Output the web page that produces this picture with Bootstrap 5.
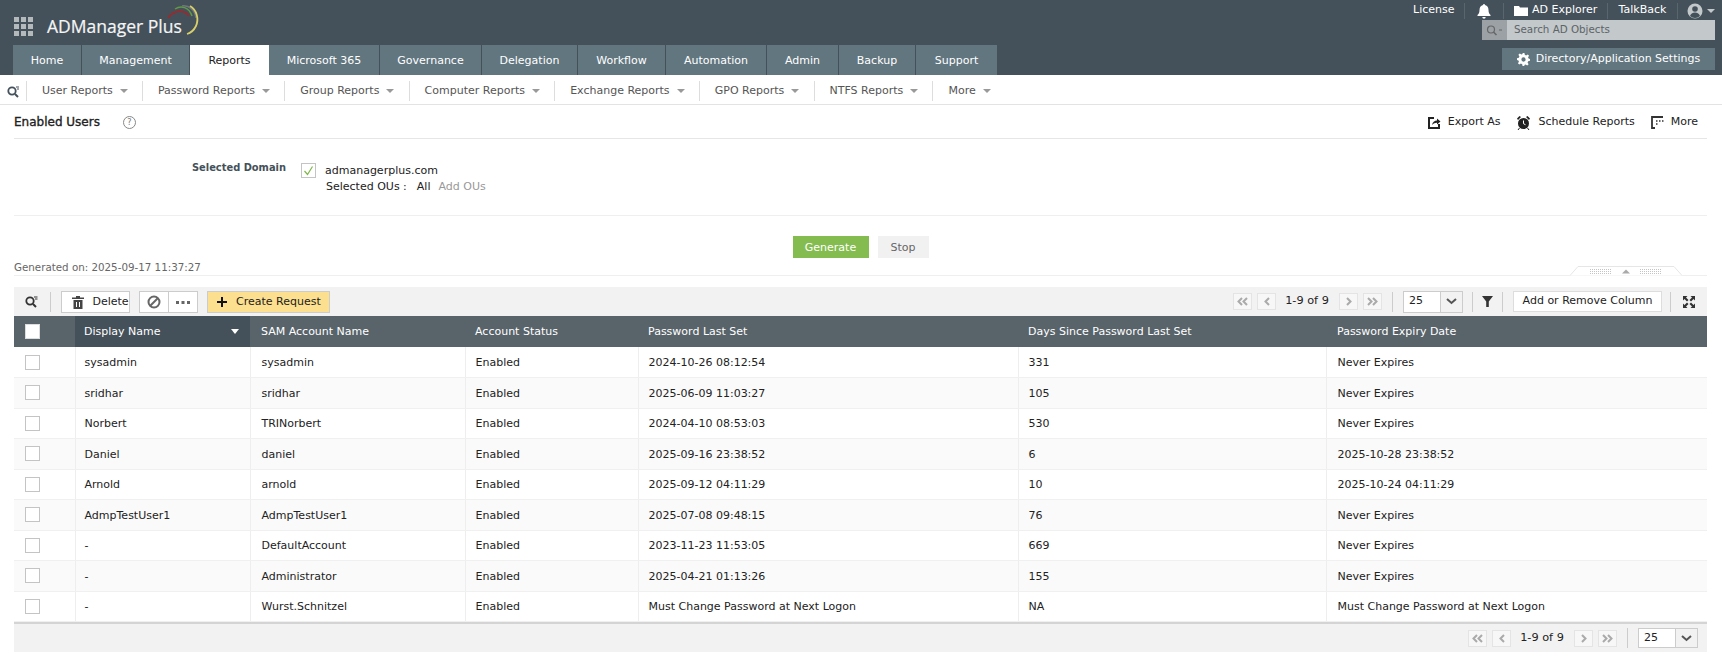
<!DOCTYPE html>
<html lang="en"><head><meta charset="utf-8"><title>ADManager Plus</title>
<link href="https://cdn.jsdelivr.net/npm/bootstrap@5.3.0/dist/css/bootstrap.min.css" rel="stylesheet">
<style>
html,body{height:657px;overflow:hidden}
body{font-family:"DejaVu Sans",Verdana,sans-serif;font-size:11px;color:#222;background:#fff}
a{text-decoration:none;color:inherit}
.hdr{height:75px;background:#44515a;color:#fff}
.hdr-left{padding-left:13px;width:1000px}
.brand{height:45px;position:relative;padding-top:7px}
.grid9{width:19px;height:19px;display:grid;grid-template-columns:repeat(3,5px);grid-auto-rows:5px;gap:2px;margin:0 14px 0 1px}
.grid9 i{background:#b4b9bc;display:block}
.brand-name{font-family:"Open Sans",sans-serif;font-size:17.5px;color:#f4f5f5;-webkit-text-stroke:.2px #f4f5f5}
.swoosh{position:absolute;left:154px;top:4px}
.tabs a{height:30px;display:flex;align-items:center;justify-content:center;background:#62767f;color:#fff;border-right:1px solid #44515a;padding-top:3px}
.tabs a.on{background:#fff;color:#222;border-right:0}
.tabs a:nth-child(1){width:69px}.tabs a:nth-child(2){width:108px}.tabs a:nth-child(3){width:79px}.tabs a:nth-child(4){width:111px}.tabs a:nth-child(5){width:102px}.tabs a:nth-child(6){width:96px}.tabs a:nth-child(7){width:88px}.tabs a:nth-child(8){width:101px}.tabs a:nth-child(9){width:72px}.tabs a:nth-child(10){width:77px}.tabs a:nth-child(11){width:81px;border-right:0}
.hdr-right{width:310px;margin-right:7px}
.top-links{height:20px;white-space:nowrap;padding-top:1px}
.top-links>span{display:flex;align-items:center;gap:4px;height:16px;border-right:1px solid #5a666e}
.tl1{padding:0 11px 0 0;width:52px}
.tl2{width:39px;justify-content:center}
.tl3{width:104px;padding-left:10px}
.tl4{width:70px;justify-content:center}
.tl5{border-right:0!important;width:37px;justify-content:flex-end}
.ad-search{width:233px;height:20px;background:#c3c8ca;font-size:10.3px}
.ad-search b{width:25px;height:20px;background:#9ba1a5;display:flex;align-items:center;justify-content:center;font-weight:400}
.ad-search span{padding-left:7px;color:#5c6468}
.set-btn{width:213px;height:22px;margin-top:8px;background:#62767f;color:#fff;gap:6px}
.subnav{height:30px;border-bottom:1px solid #e3e3e3;color:#555;white-space:nowrap;padding-top:3px}
.subnav .srch{width:27px;height:20px;border-right:1px solid #ddd;padding-left:7px}
.subnav .it{height:20px;display:flex;align-items:center;padding:0 14.2px 0 15px;border-right:1px solid #ddd}
.subnav .it:last-child{border-right:0}
.tcaret{width:0;height:0;border-left:4px solid transparent;border-right:4px solid transparent;border-top:4px solid #999;margin-left:7px;display:inline-block}
.tl5 .tcaret{border-top-color:#c3c8ca;margin-left:0}
.page{padding:0 15px 0 14px}
.titlebar{height:34px;border-bottom:1px solid #e6e6e6;padding-top:2px}
.titlebar h1{font-size:12px;font-weight:400;-webkit-text-stroke:.35px #222;margin:0;color:#222}
.help{width:13px;height:13px;border:1px solid #888;border-radius:50%;color:#777;font-size:8px;line-height:11px;text-align:center;margin-left:23px}
.act{gap:7px;margin-left:16px;color:#222}
.acts{padding-right:9px}
.selbox{height:77px;border-bottom:1px solid #efefef;padding-top:21px}
.sel-lab{width:272px;text-align:right;color:#44515a;font-weight:700;font-size:9.9px;line-height:15px;flex:none}
.chk{width:15px;height:15px;border:1px solid #c4c4c4;display:inline-block;background:#fff;flex:none;position:relative}
.dom{margin-left:15px;padding-top:2px}
.dom-name{margin-left:9px;padding-top:1px}
.ou-row{margin-top:-1px;padding-left:25px;line-height:16px}
.ou-row b{font-weight:400;margin-left:10px}
.muted-link{color:#999;margin-left:8px}
.actions{height:42px;padding-top:20px;gap:9px}
.go{width:76px;height:22px;background:#84bc4f;color:#fff;border:0;border-radius:0;font-size:11px;padding:2px 0 0}
.stop{width:51px;height:22px;background:#f1f1f1;color:#666;border:0;border-radius:0;font-size:11px;padding:2px 0 0}
.gen{height:18px;color:#666;font-size:10.3px;border-bottom:1px solid #efefef;position:relative;line-height:14px;padding-top:2px}
.collapse-tab{position:absolute;right:25px;bottom:-1px}
.tb{height:29px;background:#f2f2f2;margin-top:11px;white-space:nowrap}
.vsep{width:1px;height:20px;background:#ccc;flex:none}
.bx{height:22px;background:#fff;border:1px solid #ccc;display:flex;align-items:center;flex:none}
.tb-srch{margin-left:11px;margin-right:12px}
.delb{width:69px;margin-left:10px;padding-left:10px;padding-top:2px;gap:5px}
.grp{width:59px;margin-left:9px}
.grp span{flex:1;height:100%;display:flex;align-items:center;justify-content:center}
.grp span+span{border-left:1px solid #ccc}
.crq{width:123px;margin-left:9px;background:#fde08f;padding-left:9px;padding-top:1px;gap:9px}
.pg{width:19px;height:17px;background:#f7f7f7;border:1px solid #e4e4e4;display:flex;align-items:center;justify-content:center;flex:none}
.pg+.pg{margin-left:5px}
.pgt{margin:0 10px 0 9px;width:44px;text-align:center;font-size:11.3px;white-space:nowrap;flex:none}
.vs{margin:0 10px}
.sz{width:60px}
.sz em{font-style:normal;flex:1;padding-left:5px}
.sz u{text-decoration:none;width:22px;height:100%;border-left:1px solid #ccc;background:#f2f2f2;display:flex;align-items:center;justify-content:center}
.addcol{width:149px;height:21px;justify-content:center;border-color:#ddd;margin-left:10px}
.s1{margin-left:9px}.fil{margin:0 9px;width:11px}.s3{margin-left:8px}.exp{margin:0 12px}
.rpt{table-layout:fixed;width:100%;margin:0;border-collapse:collapse}
.rpt th{background:#58636a;color:#fff;font-weight:400;height:31px;padding:2px 0 0 10px;border:0;vertical-align:middle;position:relative}
.rpt th.sorted{background:#44515a}
.rpt th.sorted::after{content:"";position:absolute;right:11px;top:13px;border-left:4px solid transparent;border-right:4px solid transparent;border-top:5px solid #fff}
.rpt th.cbx,.rpt td.cbx{padding:0 0 0 11px}
.rpt th .chk{display:block;border-color:#ddd}
.rpt td .chk{display:block}
.rpt td{height:30.5px;padding:2px 0 0 10px;border:0;border-right:1px solid #eee;border-bottom:1px solid #f0f0f0;vertical-align:middle;color:#222;white-space:nowrap;overflow:hidden;background:#fff}
.rpt td:last-child{border-right:0}
.rpt tbody tr:nth-child(even) td{background:#fafafa}
.rpt th:nth-child(2),.rpt td:nth-child(2){padding-left:9px}
.rpt th:nth-child(3),.rpt td:nth-child(3),.rpt th:nth-child(7),.rpt td:nth-child(7){padding-left:11px}
.c0{width:61px}.c1{width:175px}.c2{width:215px}.c3{width:173px}.c4{width:380px}.c5{width:308px}
.foot{height:30px;background:#f2f2f2;border-top:2px solid #d4d4d4;padding-right:9px}
.foot .sz{height:20px}
</style></head><body>

<header class="hdr d-flex justify-content-between">
 <div class="hdr-left">
  <div class="brand d-flex align-items-center">
   <span class="grid9"><i></i><i></i><i></i><i></i><i></i><i></i><i></i><i></i><i></i></span>
   <span class="brand-name">ADManager Plus</span>
   <svg class="swoosh" width="34" height="36" viewBox="0 0 34 36" fill="none"><path d="M1 14C5 8 12 6 17 8c3 1 4 2 5 4" stroke="#9a2a2e" stroke-width="1.8"/><path d="M8 5C14 1 22 3 25 12" stroke="#5f9a45" stroke-width="1.5"/><path d="M15 2c7-1 13 4 14 12" stroke="#6f777c" stroke-width="1.5"/><path d="M23 2c7 4 9 13 6 20-2 4-5 7-9 8" stroke="#d9cf6a" stroke-width="1.8"/></svg>
  </div>
  <nav class="tabs d-flex">
   <a href="#">Home</a><a href="#">Management</a><a href="#" class="on">Reports</a><a href="#">Microsoft 365</a><a href="#">Governance</a><a href="#">Delegation</a><a href="#">Workflow</a><a href="#">Automation</a><a href="#">Admin</a><a href="#">Backup</a><a href="#">Support</a>
  </nav>
 </div>
 <div class="hdr-right d-flex flex-column align-items-end">
  <div class="top-links d-flex align-items-center justify-content-end">
   <span class="tl1">License</span>
   <span class="tl2"><svg width="16" height="16" viewBox="0 0 16 16" fill="#fff"><path d="M8 1a1 1 0 0 1 1 1c2.400.5 3.500 2.500 3.500 5 0 3 1 4 2 5v1h-13v-1c1-1 2-2 2-5 0-2.500 1.100-4.500 3.500-5a1 1 0 0 1 1-1zM6.300 14h3.400a1.700 1.700 0 0 1-3.400 0z"/></svg></span>
   <span class="tl3"><svg width="14" height="10" viewBox="0 0 14 10" fill="#fff"><path d="M0 0h5l1 1.500h8V10H0z"/></svg>AD Explorer</span>
   <span class="tl4">TalkBack</span>
   <span class="tl5"><svg width="16" height="16" viewBox="0 0 16 16"><circle cx="8" cy="8" r="7.500" fill="#c3c8ca"/><circle cx="8" cy="6" r="2.800" fill="#44515a"/><path d="M3 13c1-3 3-3.500 5-3.500s4 .5 5 3.500c-1.300 1.300-3 2-5 2s-3.700-.7-5-2z" fill="#44515a"/></svg><i class="tcaret"></i></span>
  </div>
  <div class="ad-search d-flex align-items-center"><b><svg width="17" height="11" viewBox="0 0 17 11" fill="none" stroke="#666"><circle cx="5" cy="4.500" r="3.500" stroke-width="1.200"/><path d="M7.500 7l3 3" stroke-width="1.500"/><path d="M13 5h3"/></svg></b><span>Search AD Objects</span></div>
  <div class="set-btn d-flex align-items-center justify-content-center"><svg width="13" height="13" viewBox="0 0 14 14" fill="#fff"><path fill-rule="evenodd" d="M6 0h2l.4 2 1.400.6L11.500 1.500 13 3l-1.100 1.700.6 1.300 1.500.4v2l-2 .4-.6 1.400 1.100 1.800-1.500 1.400-1.700-1.100-1.400.6L8 14H6l-.4-2-1.400-.6L2.500 12.500 1 11l1.100-1.700L1.500 8 0 7.600v-2l2-.4.6-1.400L1.500 2 3 .6l1.700 1.100L6 1.100zM7 4.700a2.300 2.300 0 1 0 0 4.600 2.300 2.300 0 0 0 0-4.600z"/></svg>Directory/Application Settings</div>
 </div>
</header>

<div class="subnav d-flex align-items-center">
 <span class="srch d-flex align-items-center"><svg width="13" height="13" viewBox="0 0 13 13" fill="none" stroke="#44515a"><circle cx="5" cy="6" r="3.700" stroke-width="1.800"/><path d="M8 9l3 3" stroke-width="2"/><path d="M9 2h3M10 4h2" stroke-width="1"/></svg></span>
 <span class="it">User Reports<i class="tcaret"></i></span><span class="it">Password Reports<i class="tcaret"></i></span><span class="it">Group Reports<i class="tcaret"></i></span><span class="it">Computer Reports<i class="tcaret"></i></span><span class="it">Exchange Reports<i class="tcaret"></i></span><span class="it">GPO Reports<i class="tcaret"></i></span><span class="it">NTFS Reports<i class="tcaret"></i></span><span class="it">More<i class="tcaret"></i></span>
</div>

<main class="page">
 <div class="titlebar d-flex align-items-center">
  <h1>Enabled Users</h1><span class="help">?</span>
  <div class="ms-auto d-flex align-items-center acts">
   <span class="act d-flex align-items-center"><svg width="14" height="14" viewBox="0 0 14 14" fill="none" stroke="#222"><path d="M7 2H2v10h10V8" stroke-width="2"/><path d="M5 9c.5-3 2.500-4.500 5-4.500V2.500l3.500 3-3.500 3V6.800C8 6.800 6.500 7.500 5 9z" fill="#222" stroke="none"/></svg>Export As</span>
   <span class="act d-flex align-items-center"><svg width="15" height="16" viewBox="0 0 15 16" fill="#222"><circle cx="7.500" cy="8.500" r="5.500"/><path d="M1 3.500 3.500 1l1.500 1L2 5zM14 3.500 11.500 1 10 2l3 3z"/><path d="M7.500 5.500v3.200l2 1" stroke="#fff" fill="none"/><path d="M3.500 13l-1.500 2M11.500 13l1.500 2" stroke="#222"/></svg>Schedule Reports</span>
   <span class="act d-flex align-items-center"><svg width="13" height="13" viewBox="0 0 13 13" fill="none" stroke="#333"><path d="M12 1H1v11h3" stroke-width="1.800"/><path d="M5 5h1.500M8 5h1.500M11 5h1.500M5 8h1.500" stroke-width="1.600"/></svg>More</span>
  </div>
 </div>

 <div class="selbox d-flex align-items-start">
  <div class="sel-lab">Selected Domain</div>
  <div class="dom">
   <div class="d-flex align-items-center"><span class="chk"><svg class="d-block" width="13" height="13" viewBox="0 0 13 13" fill="none" stroke="#7db648" stroke-width="1.200"><path d="M2.500 7l3 3.500 5-8"/></svg></span><span class="dom-name">admanagerplus.com</span></div>
   <div class="ou-row">Selected OUs :<b>All</b><a href="#" class="muted-link">Add OUs</a></div>
  </div>
 </div>

 <div class="actions d-flex justify-content-center align-items-start">
  <button type="button" class="btn go">Generate</button><button type="button" class="btn stop">Stop</button>
 </div>

 <div class="gen">Generated on: 2025-09-17 11:37:27
  <svg class="collapse-tab" width="112" height="10" viewBox="0 0 112 10" fill="none"><path d="M0 9.500 8 .5h96l8 9" fill="#fff" stroke="#e6e6e6"/><path d="M20 3.500h22M20 5.500h22M20 7.500h22M70 3.500h22M70 5.500h22M70 7.500h22" stroke="#c4c4c4" stroke-dasharray="1 1"/><path d="M52 7.500 56 3.500l4 4z" fill="#aaa"/></svg>
 </div>

 <div class="tb d-flex align-items-center">
  <svg class="tb-srch" width="13" height="13" viewBox="0 0 13 13" fill="none" stroke="#333"><circle cx="5" cy="6" r="3.700" stroke-width="1.800"/><path d="M8 9l3 3" stroke-width="2"/><path d="M9 2h3.500M10 4h2.500" stroke-width="1"/></svg>
  <span class="vsep"></span>
  <span class="bx delb"><svg width="12" height="13" viewBox="0 0 12 13" fill="#444"><path d="M4 0h4v1.500h4V3H0V1.500h4zM1.500 4h9v9h-9zM4 6v5h1V6zM7 6v5h1V6z" fill-rule="evenodd"/></svg>&nbsp;Delete</span>
  <span class="bx grp"><span><svg width="14" height="14" viewBox="0 0 14 14" fill="none" stroke="#666" stroke-width="2"><circle cx="7" cy="7" r="5.500"/><path d="M3 11 11 3"/></svg></span><span><svg width="14" height="4" viewBox="0 0 14 4" fill="#666"><rect x="0" y="1" width="3" height="3"/><rect x="5.500" y="1" width="3" height="3"/><rect x="11" y="1" width="3" height="3"/></svg></span></span>
  <span class="bx crq"><svg width="10" height="10" viewBox="0 0 10 10" stroke="#111" stroke-width="2"><path d="M5 0v10M0 5h10"/></svg>Create Request</span>
  <div class="ms-auto d-flex align-items-center">
   <span class="pg"><svg width="11" height="9" viewBox="0 0 11 9" fill="none" stroke="#aaa" stroke-width="2"><path d="M5 1 1.500 4.500 5 8M10 1 6.500 4.500 10 8"/></svg></span><span class="pg"><svg width="6" height="9" viewBox="0 0 6 9" fill="none" stroke="#aaa" stroke-width="2"><path d="M5 1 1.500 4.500 5 8"/></svg></span>
   <span class="pgt">1-9 of 9</span>
   <span class="pg"><svg width="6" height="9" viewBox="0 0 6 9" fill="none" stroke="#aaa" stroke-width="2"><path d="M1 1l3.500 3.500L1 8"/></svg></span><span class="pg"><svg width="11" height="9" viewBox="0 0 11 9" fill="none" stroke="#aaa" stroke-width="2"><path d="M1 1l3.500 3.500L1 8M6 1l3.500 3.500L6 8"/></svg></span>
   <span class="vsep vs"></span>
   <span class="bx sz"><em>25</em><u><svg width="11" height="7" viewBox="0 0 11 7" fill="none" stroke="#555" stroke-width="2"><path d="M1 1l4.500 4L10 1"/></svg></u></span>
   <span class="vsep s1"></span>
   <svg class="fil" width="11" height="11" viewBox="0 0 11 11" fill="#333"><path d="M0 0h11L6.800 5.500V11H4.200V5.500z"/></svg>
   <span class="vsep"></span>
   <span class="bx addcol">Add or Remove Column</span>
   <span class="vsep s3"></span>
   <svg class="exp" width="12" height="12" viewBox="0 0 12 12" fill="#333"><path d="M0 0h4.500L3 1.500 5.500 4 4 5.500 1.500 3 0 4.500zM12 0v4.500L10.500 3 8 5.500 6.500 4 9 1.500 7.500 0zM0 12V7.500L1.500 9 4 6.500 5.500 8 3 10.500 4.500 12zM12 12H7.500L9 10.500 6.500 8 8 6.500 10.500 9 12 7.500z"/></svg>
  </div>
 </div>

 <table class="table rpt">
  <thead><tr>
   <th class="c0 cbx"><span class="chk"></span></th><th class="c1 sorted">Display Name</th><th class="c2">SAM Account Name</th><th class="c3">Account Status</th><th class="c4">Password Last Set</th><th class="c5">Days Since Password Last Set</th><th>Password Expiry Date</th>
  </tr></thead>
  <tbody>
   <tr><td class="cbx"><span class="chk"></span></td><td>sysadmin</td><td>sysadmin</td><td>Enabled</td><td>2024-10-26 08:12:54</td><td>331</td><td>Never Expires</td></tr>
   <tr><td class="cbx"><span class="chk"></span></td><td>sridhar</td><td>sridhar</td><td>Enabled</td><td>2025-06-09 11:03:27</td><td>105</td><td>Never Expires</td></tr>
   <tr><td class="cbx"><span class="chk"></span></td><td>Norbert</td><td>TRINorbert</td><td>Enabled</td><td>2024-04-10 08:53:03</td><td>530</td><td>Never Expires</td></tr>
   <tr><td class="cbx"><span class="chk"></span></td><td>Daniel</td><td>daniel</td><td>Enabled</td><td>2025-09-16 23:38:52</td><td>6</td><td>2025-10-28 23:38:52</td></tr>
   <tr><td class="cbx"><span class="chk"></span></td><td>Arnold</td><td>arnold</td><td>Enabled</td><td>2025-09-12 04:11:29</td><td>10</td><td>2025-10-24 04:11:29</td></tr>
   <tr><td class="cbx"><span class="chk"></span></td><td>AdmpTestUser1</td><td>AdmpTestUser1</td><td>Enabled</td><td>2025-07-08 09:48:15</td><td>76</td><td>Never Expires</td></tr>
   <tr><td class="cbx"><span class="chk"></span></td><td>-</td><td>DefaultAccount</td><td>Enabled</td><td>2023-11-23 11:53:05</td><td>669</td><td>Never Expires</td></tr>
   <tr><td class="cbx"><span class="chk"></span></td><td>-</td><td>Administrator</td><td>Enabled</td><td>2025-04-21 01:13:26</td><td>155</td><td>Never Expires</td></tr>
   <tr><td class="cbx"><span class="chk"></span></td><td>-</td><td>Wurst.Schnitzel</td><td>Enabled</td><td>Must Change Password at Next Logon</td><td>NA</td><td>Must Change Password at Next Logon</td></tr>
  </tbody>
 </table>

 <div class="foot d-flex align-items-center justify-content-end">
   <span class="pg"><svg width="11" height="9" viewBox="0 0 11 9" fill="none" stroke="#aaa" stroke-width="2"><path d="M5 1 1.500 4.500 5 8M10 1 6.500 4.500 10 8"/></svg></span><span class="pg"><svg width="6" height="9" viewBox="0 0 6 9" fill="none" stroke="#aaa" stroke-width="2"><path d="M5 1 1.500 4.500 5 8"/></svg></span>
   <span class="pgt">1-9 of 9</span>
   <span class="pg"><svg width="6" height="9" viewBox="0 0 6 9" fill="none" stroke="#aaa" stroke-width="2"><path d="M1 1l3.500 3.500L1 8"/></svg></span><span class="pg"><svg width="11" height="9" viewBox="0 0 11 9" fill="none" stroke="#aaa" stroke-width="2"><path d="M1 1l3.500 3.500L1 8M6 1l3.500 3.500L6 8"/></svg></span>
   <span class="vsep vs"></span>
   <span class="bx sz"><em>25</em><u><svg width="11" height="7" viewBox="0 0 11 7" fill="none" stroke="#555" stroke-width="2"><path d="M1 1l4.500 4L10 1"/></svg></u></span>
 </div>
</main>
</body></html>
